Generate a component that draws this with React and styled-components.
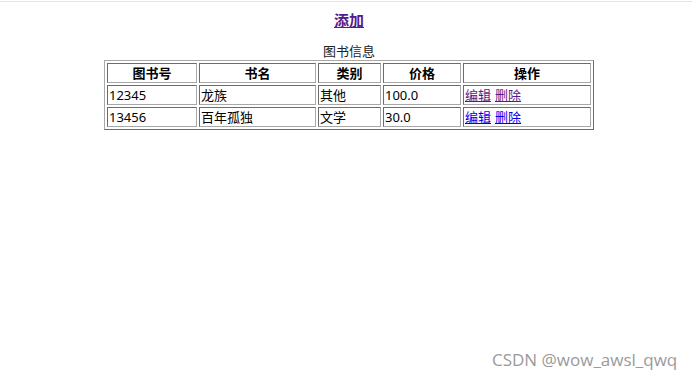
import React from "react";
import styled, {createGlobalStyle} from "styled-components";

const GlobalStyle = createGlobalStyle`
    html, body {
        margin: 0;
        padding: 0;
        background: #fff;
    }
    body {
        font-family: "Noto Sans", "Noto Sans CJK SC", sans-serif;
        color: #000;
    }
`;

const Page = styled.div`
    position: relative;
    width: 692px;
    height: 383px;
    padding-left: 6px;
    box-sizing: border-box;
    overflow: hidden;
`;

const TopRule = styled.div`
    margin: 1px 0 0 -6px;
    height: 1px;
    background: #e4e4e4;
`;

const Heading = styled.div`
    margin-top: 8px;
    margin-bottom: 13px;
    text-align: center;
    line-height: 20px;

    a {
        font-size: 15px;
        font-weight: bold;
        color: #551a8b;
        text-decoration: underline;
    }
`;

const BookTable = styled.table`
    margin: 0 auto;
    table-layout: fixed;
    border-collapse: separate;
    border-spacing: 2px;
    border: 1px solid;
    border-color: #a8a8a8 #6c6c6c #6c6c6c #a8a8a8;
    font-size: 13px;

    caption {
        line-height: 17px;
        font-size: 13px;
        color: #222;
    }
`;

const Cell = styled.td`
    width: ${(props) => props.w}px;
    box-sizing: border-box;
    padding: 0 1px;
    height: 20px;
    line-height: 18px;
    border: 1px solid;
    border-color: #6c6c6c #a8a8a8 #a8a8a8 #6c6c6c;
    text-align: left;
    white-space: nowrap;
`;

const HeadCell = styled(Cell).attrs({as: "th"})`
    text-align: center;
    font-weight: bold;
`;

const ActionLink = styled.a`
    color: ${(props) => (props.visited ? "#551a8b" : "#0000ee")};
    text-decoration: underline;
    margin-right: 4px;
`;

const Watermark = styled.div`
    position: absolute;
    left: 492px;
    top: 348px;
    font-family: "Open Sans", "Noto Sans", sans-serif;
    font-size: 17px;
    line-height: 24px;
    color: #9a9a9a;
`;

const columns = [
    {name: "图书号", w: 90},
    {name: "书名", w: 117},
    {name: "类别", w: 63},
    {name: "价格", w: 78},
    {name: "操作", w: 128},
];

const books = [
    {id: "12345", name: "龙族", type: "其他", price: "100.0", visited: true},
    {id: "13456", name: "百年孤独", type: "文学", price: "30.0", visited: false},
];

const App = () => {
    return (
        <>
            <GlobalStyle/>
            <Page>
                <TopRule/>
                <Heading><a href="#">添加</a></Heading>
                <BookTable>
                    <caption>图书信息</caption>
                    <thead>
                    <tr>
                        {columns.map((c) => (
                            <HeadCell key={c.name} w={c.w}>{c.name}</HeadCell>
                        ))}
                    </tr>
                    </thead>
                    <tbody>
                    {books.map((b) => (
                        <tr key={b.id}>
                            <Cell w={90}>{b.id}</Cell>
                            <Cell w={117}>{b.name}</Cell>
                            <Cell w={63}>{b.type}</Cell>
                            <Cell w={78}>{b.price}</Cell>
                            <Cell w={128}>
                                <ActionLink href="#" visited={b.visited ? 1 : 0}>编辑</ActionLink>
                                <ActionLink href="#" visited={b.visited ? 1 : 0}>删除</ActionLink>
                            </Cell>
                        </tr>
                    ))}
                    </tbody>
                </BookTable>
                <Watermark>CSDN @wow_awsl_qwq</Watermark>
            </Page>
        </>
    );
};

export default App;
